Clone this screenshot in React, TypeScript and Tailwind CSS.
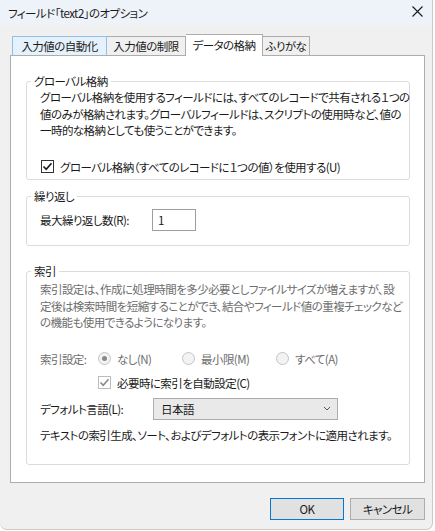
import React from "react";

const font = {
  fontFamily: '"Noto Sans CJK JP", "Noto Sans", sans-serif',
};

function Check({ disabled }: { disabled?: boolean }) {
  return (
    <span
      className={
        "flex h-[13px] w-[13px] shrink-0 items-center justify-center border bg-white " +
        (disabled ? "border-[#bcbcbc]" : "border-[#333333]")
      }
    >
      <svg width="11" height="11" viewBox="0 0 11 11">
        <path
          d="M1.5 5.5 L4.2 8.3 L9.5 2.2"
          fill="none"
          stroke={disabled ? "#8a8a8a" : "#1a1a1a"}
          strokeWidth="1.6"
        />
      </svg>
    </span>
  );
}

function Radio({ checked }: { checked?: boolean }) {
  return (
    <span className="flex h-[13px] w-[13px] shrink-0 items-center justify-center rounded-full border border-[#c4c4c4] bg-[#f3f3f3]">
      {checked && <span className="h-[5px] w-[5px] rounded-full bg-[#8a8a8a]" />}
    </span>
  );
}

function Group({
  label,
  h,
  mt,
  children,
}: {
  label: string;
  h: string;
  mt: string;
  children: React.ReactNode;
}) {
  return (
    <div className={"relative ml-[15px] w-[384px] rounded-[3px] border border-[#dcdcdc] " + h + " " + mt}>
      <span className="absolute left-[4px] top-[-9px] bg-white px-[3px] leading-[16px] text-[#1a1a1a]">
        {label}
      </span>
      {children}
    </div>
  );
}

export default function App() {
  return (
    <div className="h-[531px] w-[435px] bg-white" style={font}>
      <div className="[font-feature-settings:'palt'] flex h-[530px] w-[433px] flex-col overflow-hidden rounded-b-[7px] border-b border-r border-[#c9c9c9] bg-[#f0f0f0] text-[11.5px] tracking-[-0.55px] text-[#1a1a1a]">
        {/* title bar */}
        <div className="flex h-[25px] shrink-0 items-center justify-between bg-[#eef2f9] pl-[8px] pr-[9px]">
          <span className="leading-[16px]">フィールド「text2」のオプション</span>
          <svg width="11" height="11" viewBox="0 0 11 11" className="mt-[-2px]">
            <path d="M0.5 0.5 L10.5 10.5 M10.5 0.5 L0.5 10.5" stroke="#1a1a1a" strokeWidth="1.1" />
          </svg>
        </div>

        {/* tabs */}
        <div className="ml-[12px] mt-[9px] flex h-[21px] items-end">
          <div className="flex h-[19px] w-[95px] items-center justify-center border border-b-0 border-[#8fbfea] bg-[#e5f1fb] leading-[16px]">
            入力値の自動化
          </div>
          <div className="flex h-[19px] w-[79px] items-center justify-center border border-b-0 border-l-0 border-[#adadad] bg-[#f0f0f0] leading-[16px]">
            入力値の制限
          </div>
          <div className="relative z-10 -mb-px flex h-[22px] w-[77px] items-center justify-center border border-b-0 border-l-0 border-[#adadad] bg-white pb-[1px] leading-[16px]">
            データの格納
          </div>
          <div className="flex h-[19px] w-[47px] items-center justify-center border border-b-0 border-l-0 border-[#adadad] bg-[#f0f0f0] leading-[16px]">
            ふりがな
          </div>
        </div>

        {/* panel */}
        <div className="ml-[10px] flex h-[428px] w-[415px] flex-col border border-[#adadad] bg-white">
          <Group label="グローバル格納" h="h-[99px]" mt="mt-[25px]">
            <div className="whitespace-nowrap pl-[13px] pt-[7px] leading-[16.5px]">
              グローバル格納を使用するフィールドには、すべてのレコードで共有される１つの
              <br />
              値のみが格納されます。グローバルフィールドは、スクリプトの使用時など、値の
              <br />
              一時的な格納としても使うことができます。
            </div>
            <div className="ml-[14px] mt-[20px] flex h-[16px] items-center gap-[6px] leading-[16px]">
              <Check />
              <span>グローバル格納（すべてのレコードに１つの値）を使用する(U)</span>
            </div>
          </Group>

          <Group label="繰り返し" h="h-[50px]" mt="mt-[16px]">
            <div className="ml-[13px] mt-[12px] flex items-center">
              <span className="w-[112px] leading-[16px]">最大繰り返し数(R):</span>
              <div className="flex h-[22px] w-[44px] items-center border border-[#9e9e9e] bg-white pl-[5px] leading-[16px]">
                1
              </div>
            </div>
          </Group>

          <Group label="索引" h="h-[194px]" mt="mt-[25px]">
            <div className="whitespace-nowrap pl-[13px] pt-[9px] leading-[16.5px] text-[#6d6d6d]">
              索引設定は、作成に処理時間を多少必要としファイルサイズが増えますが、設
              <br />
              定後は検索時間を短縮することができ、結合やフィールド値の重複チェックなど
              <br />
              の機能も使用できるようになります。
            </div>
            <div className="ml-[13px] mt-[20px] flex h-[16px] items-center leading-[16px] text-[#6d6d6d]">
              <span className="w-[58px]">索引設定:</span>
              <div className="flex w-[84px] items-center gap-[6px]">
                <Radio checked />
                <span>なし(N)</span>
              </div>
              <div className="flex w-[94px] items-center gap-[6px]">
                <Radio />
                <span>最小限(M)</span>
              </div>
              <div className="flex items-center gap-[6px]">
                <Radio />
                <span>すべて(A)</span>
              </div>
            </div>
            <div className="ml-[71px] mt-[8px] flex h-[16px] items-center gap-[6px] leading-[16px]">
              <Check disabled />
              <span>必要時に索引を自動設定(C)</span>
            </div>
            <div className="ml-[13px] mt-[7px] flex items-center">
              <span className="w-[113px] leading-[16px]">デフォルト言語(L):</span>
              <div className="flex h-[22px] w-[185px] items-center justify-between border border-[#adadad] bg-[#e9e9e9] pl-[7px] pr-[6px] leading-[16px]">
                <span>日本語</span>
                <svg width="8" height="5" viewBox="0 0 8 5">
                  <path d="M1 1 L4 4 L7 1" fill="none" stroke="#555" strokeWidth="1" />
                </svg>
              </div>
            </div>
            <div className="ml-[13px] mt-[7px] h-[16px] whitespace-nowrap leading-[16px]">
              テキストの索引生成、ソート、およびデフォルトの表示フォントに適用されます。
            </div>
          </Group>
        </div>

        {/* buttons */}
        <div className="mt-[15px] flex w-[425px] justify-end gap-[6px]">
          <div className="flex h-[22px] w-[74px] items-center justify-center border border-[#0078d4] bg-[#e1e1e1] leading-[16px]">
            OK
          </div>
          <div className="flex h-[22px] w-[75px] items-center justify-center border border-[#adadad] bg-[#e1e1e1] leading-[16px]">
            キャンセル
          </div>
        </div>
      </div>
    </div>
  );
}
